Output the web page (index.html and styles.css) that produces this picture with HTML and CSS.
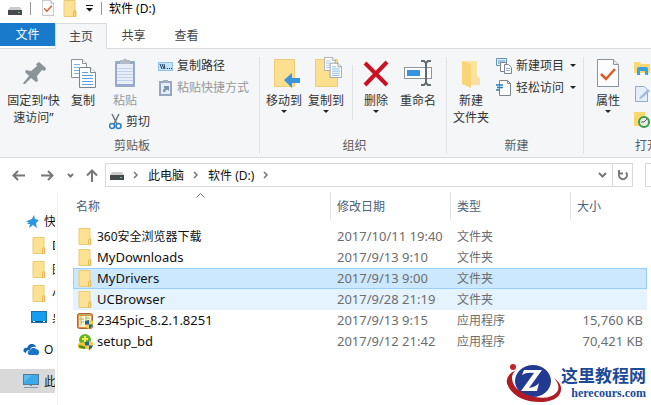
FILE: index.html
```
<!DOCTYPE html>
<html lang="zh-CN">
<head>
  <meta charset="utf-8" />
  <title>软件 (D:)</title>
  <link rel="stylesheet" href="styles.css">
</head>
<body>

<svg class="defs" aria-hidden="true">
  <symbol id="folder" viewBox="0 0 14 17">
    <path d="M1 .5h11v10l1 1v5H1z" fill="#fde294" stroke="#eccb74"/>
    <path d="M10.500 16.500v-5l2-1v6z" fill="#fbdb80" stroke="#e2be60"/>
  </symbol>
  <symbol id="drive" viewBox="0 0 14 9">
    <path d="M2 1h10l2 3H0z" fill="#c9cbcc"/>
    <rect y="4" width="14" height="5" fill="#45494b"/>
    <rect x="10" y="6" width="2" height="1" fill="#5fd068"/>
  </symbol>
  <symbol id="check" viewBox="0 0 22 28">
    <path d="M.5.5h16l5 5v22H.5z" fill="#fdfdfd" stroke="#8a929b"/>
    <path d="M16.500.5v5h5" fill="#e4e7ea" stroke="#8a929b"/>
    <path d="M4 15l5 5 9-10" fill="none" stroke="#dc5a28" stroke-width="2.500"/>
  </symbol>
  <symbol id="sheets" viewBox="0 0 25 29">
    <path d="M.5.500h11l4 4v14H.5z" fill="#fff" stroke="#8a939c"/>
    <path d="M11.500.5v4h4" fill="#fff" stroke="#8a939c"/>
    <path d="M3 5.500h6M3 8.500h5M3 11.500h5M3 14.500h5" stroke="#7db4e6"/>
    <path d="M8.500 8.500h11l5 5v15h-16z" fill="#fff" stroke="#7c858e"/>
    <path d="M19.500 8.500v5h5" fill="#fff" stroke="#7c858e"/>
    <path d="M11 13.500h6M11 16.500h11M11 19.500h11M11 22.500h11M11 25.500h11" stroke="#5aa0e0"/>
  </symbol>
  <symbol id="chev" viewBox="0 0 6 8">
    <path d="M1 1l3 3-3 3" fill="none" stroke="#777" stroke-width="1.500"/>
  </symbol>
  <symbol id="shield" viewBox="0 0 8 9">
    <path d="M4 0l4 1v4q-1 3-4 4-3-1-4-4V1z" fill="#f2d14b"/>
    <path d="M4 0v4.500H0V1zM4 4.500h4q-1 3.500-4 4.500z" fill="#28649c"/>
  </symbol>
</svg>

<header class="titlebar">
  <svg class="tb-drive" width="14" height="9"><use href="#drive"/></svg>
  <span class="tb-sep"></span>
  <button class="tb-btn" aria-label="属性"><svg width="12" height="16"><use href="#check"/></svg></button>
  <button class="tb-btn" aria-label="新建文件夹"><svg width="14" height="17"><use href="#folder"/></svg></button>
  <button class="tb-btn tb-more" aria-label="自定义快速访问工具栏"><svg width="7" height="7" viewBox="0 0 7 7"><path d="M0 0h7v1H0zM0 3h7L3.500 6.500z" fill="#111"/></svg></button>
  <span class="tb-sep tb-sep2"></span>
  <h1>软件 (D:)</h1>
</header>

<nav class="tabs">
  <button class="tab file">文件</button>
  <button class="tab active">主页</button>
  <button class="tab">共享</button>
  <button class="tab">查看</button>
</nav>

<section class="ribbon">
  <div class="group clipboard">
    <div class="tools">
      <button class="big pin">
        <svg width="32" height="32" viewBox="0 0 32 32"><path d="M21 5l7 6-1 3-3-1-5 6 1 5-2 1-5-4-6 6-2 0 1-2 5-6-4-4 1-2 5 1 6-5-1-2z" fill="#8b9499"/></svg>
        <span>固定到“快<br>速访问”</span>
      </button>
      <button class="big copy">
        <svg width="32" height="32" viewBox="-4 -2 32 32"><use href="#sheets" width="25" height="29"/></svg>
        <span>复制</span>
      </button>
      <div class="paste-col">
        <button class="big off">
          <svg width="32" height="32" viewBox="0 0 32 32">
            <rect x="6" y="4" width="20" height="26" rx="1" fill="#8298c0"/>
            <rect x="8" y="7" width="16" height="20" fill="#e6edf9"/>
            <path d="M8 11.500h16M8 14.500h16M8 17.500h16M8 20.500h16M8 23.500h16" stroke="#b4c8e8"/>
            <path d="M11 3h3q2-3 4 0h3v4H11z" fill="#a4acb8"/>
          </svg>
          <span>粘贴</span>
        </button>
        <button class="small cut">
          <svg width="13" height="16" viewBox="0 0 13 16">
            <path d="M3 0l5 10M10 0L5 10" stroke="#6d777e" stroke-width="1.500"/>
            <circle cx="3" cy="12" r="2.500" fill="none" stroke="#2b7cc4" stroke-width="1.500"/>
            <circle cx="9.500" cy="12" r="2.500" fill="none" stroke="#2b7cc4" stroke-width="1.500"/>
          </svg>
          剪切
        </button>
      </div>
      <div class="stack">
        <button class="small">
          <svg width="15" height="16" viewBox="0 0 15 16"><rect x=".5" y="4.500" width="14" height="8" fill="#c3e2fa" stroke="#92bfe2"/><path d="M2 6l2 5M4 6l2 5M6 6l1 5M9 10.500h1M11 10.500h1M13 10.500h1" stroke="#1b3d66"/></svg>
          复制路径
        </button>
        <button class="small off">
          <svg width="15" height="16" viewBox="0 0 15 16"><rect x="2" y="2" width="11" height="13" fill="#e4ecf8" stroke="#7f94b8" stroke-width="2"/><path d="M5 0h5v3H5z" fill="#8f9bb0"/><path d="M5 12q0-4 3-4H6V6h5v5L9.500 9.500Q7 10 7 12z" fill="#5f789f"/></svg>
          粘贴快捷方式
        </button>
      </div>
    </div>
    <div class="caption">剪贴板</div>
  </div>

  <div class="group organize">
    <div class="tools">
      <button class="big">
        <svg width="32" height="32" viewBox="0 0 32 32"><path d="M6.500 2.500h20v27h-20z" fill="#fde08f" stroke="#ecce78"/><path d="M16 23l8-7v5h8v5h-8v5z" fill="#3a94dc"/></svg>
        <span>移动到</span><i class="caret"></i>
      </button>
      <button class="big">
        <svg width="32" height="32" viewBox="0 0 32 32"><path d="M5.500 2.500h22v27h-22z" fill="#fde08f" stroke="#ecce78"/><use href="#sheets" x="14" y="0" width="18" height="21"/></svg>
        <span>复制到</span><i class="caret"></i>
      </button>
      <span class="divider"></span>
      <button class="big">
        <svg width="32" height="32" viewBox="0 0 32 32"><path d="M5 6l22 22M27 5L5 28" stroke="#cb1224" stroke-width="4"/></svg>
        <span>删除</span><i class="caret"></i>
      </button>
      <button class="big">
        <svg width="32" height="32" viewBox="0 0 32 32"><rect x="2.500" y="10.500" width="27" height="11" fill="#fff" stroke="#8e979d"/><rect x="5" y="13" width="13" height="6" fill="#3593df"/><path d="M19 4h3l2 2 2-2h3M24 5v22M19 28h3l2-2 2 2h3" fill="none" stroke="#626b70" stroke-width="2"/></svg>
        <span>重命名</span>
      </button>
    </div>
    <div class="caption">组织</div>
  </div>

  <div class="group new">
    <div class="tools">
      <button class="big">
        <svg width="32" height="32" viewBox="0 0 32 32"><path d="M7 4h15v22H7z" fill="#fbe3a0"/><path d="M7 4l9 3v24l-9-4z" fill="#f8d678"/><path d="M16 28h9v-7l-3-2-6 2z" fill="#fae0a0"/></svg>
        <span>新建<br>文件夹</span>
      </button>
      <div class="stack">
        <button class="small">
          <svg width="16" height="16" viewBox="0 0 16 16"><path d="M.5.500h10v7H.5z" fill="#e4f1fb" stroke="#6295ba"/><path d="M2 3h7M2 5h3" stroke="#4e98d2"/><path d="M4.500 4.500h6v9h-6z" fill="#fff" stroke="#7e868d"/><path d="M8.500 6.500h4l3 3v6h-7z" fill="#fff" stroke="#7e868d"/><path d="M10 10.500h4M10 12.500h4" stroke="#8bb7dc"/></svg>
          新建项目<i class="caret"></i>
        </button>
        <button class="small">
          <svg width="16" height="16" viewBox="0 0 16 16"><path d="M3.500.500h8l3 3v12h-11z" fill="#fff" stroke="#7e868d"/><path d="M11.500.5v3h3" fill="none" stroke="#7e868d"/><path d="M0 5h7M1 7.500h6M0 10h4" stroke="#2a7ec4" stroke-width="1.500"/></svg>
          轻松访问<i class="caret"></i>
        </button>
      </div>
    </div>
    <div class="caption">新建</div>
  </div>

  <div class="group open">
    <div class="tools">
      <button class="big">
        <svg width="32" height="32" viewBox="-5 -2 32 32"><use href="#check" width="22" height="28"/></svg>
        <span>属性</span><i class="caret"></i>
      </button>
      <div class="stack icons">
        <button class="small" aria-label="打开"><svg width="16" height="16" viewBox="0 0 16 16"><path d="M0 2h6l1 2h9v9H0z" fill="#fbd873"/><path d="M3 15V9q0-2 2-2h7q2 0 2 2v6h-3v-4H6v4z" fill="#38a3dc"/></svg></button>
        <button class="small" aria-label="编辑"><svg width="16" height="16" viewBox="0 0 16 16"><path d="M1.500.500h9l3 3v12h-12z" fill="#e4effb" stroke="#93a9c9"/><path d="M5 12l9-9 2 2-9 8z" fill="#a3b9da"/></svg></button>
        <button class="small" aria-label="历史记录"><svg width="16" height="16" viewBox="0 0 16 16"><path d="M0 0h11v14H0z" fill="#f9d770"/><circle cx="10" cy="10" r="5" fill="#e9efea" stroke="#3d9d46" stroke-width="2"/><path d="M10 10l3-3M10 10H7" stroke="#555"/></svg></button>
      </div>
    </div>
    <div class="caption">打开</div>
  </div>
</section>

<div class="navbar">
  <div class="arrows">
    <button aria-label="后退"><svg width="13" height="11" viewBox="0 0 13 11"><path d="M13 5.500H2M6 1L1.500 5.500 6 10"/></svg></button>
    <button aria-label="前进"><svg width="13" height="11" viewBox="0 0 13 11"><path d="M0 5.500h11M7 1l4.500 4.500L7 10"/></svg></button>
    <button aria-label="最近浏览的位置"><svg width="7" height="5" viewBox="0 0 7 5"><path d="M1 1l2.500 2.500L6 1"/></svg></button>
    <button aria-label="上移"><svg width="12" height="13" viewBox="0 0 12 13"><path d="M6 13V2M1 6.500L6 1.500l5 5"/></svg></button>
  </div>
  <div class="address">
    <svg width="14" height="9"><use href="#drive"/></svg>
    <svg width="6" height="8"><use href="#chev"/></svg>
    <a href="#">此电脑</a>
    <svg width="6" height="8"><use href="#chev"/></svg>
    <a href="#">软件 (D:)</a>
    <svg width="6" height="8"><use href="#chev"/></svg>
    <button class="drop" aria-label="以前的位置"><svg width="9" height="6" viewBox="0 0 9 6"><path d="M1 1l3.500 3.500L8 1"/></svg></button>
    <button class="refresh" aria-label="刷新"><svg width="12" height="12" viewBox="0 0 12 12"><path d="M3 3.500a4 4 0 1 0 6 0M2 1v3.500h4"/></svg></button>
  </div>
  <input class="search" type="text" aria-label="搜索">
</div>

<main class="content">
  <nav class="sidebar">
    <a href="#" class="root"><svg width="13" height="13" viewBox="0 0 13 13"><path d="M8 0l1 4 4 1-3 3 1 5-4-3-4 3 1-4H1l2-2H0l3-2 3-1z" fill="#2b97e2"/></svg>快</a>
    <a href="#"><svg width="14" height="17"><use href="#folder"/></svg>D</a>
    <a href="#"><svg width="14" height="17"><use href="#folder"/></svg>图</a>
    <a href="#"><svg width="14" height="17"><use href="#folder"/></svg>小</a>
    <a href="#" class="desk"><svg width="16" height="12" viewBox="0 0 16 12"><rect x=".5" y=".5" width="15" height="11" fill="#159df0" stroke="#2470a4"/><path d="M1 10.500h14" stroke="#0b4f87"/><path d="M2 10.500h2M12 10.500h2" stroke="#fff"/></svg>桌</a>
    <a href="#" class="root cloud"><svg width="16" height="11" viewBox="0 0 16 11"><path d="M3 9Q-1 8 1 5q1-2 3-1 2-5 6-4 3 1 3 3-5-1-6 3-4 0-4 3z" fill="#1567b5"/><path d="M6 11q-3-3 1-5 3-4 6-1 4 1 3 4l-1 2z" fill="#1c75c8"/></svg>O</a>
    <a href="#" class="root pc"><svg width="16" height="15" viewBox="0 0 16 15"><rect x=".5" y=".5" width="15" height="10" fill="#5bbcf2" stroke="#52798f"/><path d="M1 8l8-7h6v9H1z" fill="#3caaea"/><path d="M7 11h2v1H7z" fill="#7d8b94"/><path d="M1 13.500h14" stroke="#7d9eb5"/></svg>此</a>
  </nav>

  <div class="files">
    <table>
      <colgroup><col><col class="c-date"><col class="c-type"><col class="c-size"></colgroup>
      <thead>
        <tr>
          <th>名称<svg class="sort" width="9" height="5" viewBox="0 0 9 5"><path d="M.5 4.500l4-4 4 4" fill="none" stroke="#777"/></svg></th>
          <th>修改日期</th><th>类型</th><th>大小</th>
        </tr>
      </thead>
      <tbody>
        <tr><td class="name zh"><svg width="14" height="17"><use href="#folder"/></svg>360安全浏览器下载</td><td>2017/10/11 19:40</td><td class="zh">文件夹</td><td></td></tr>
        <tr><td class="name"><svg width="14" height="17"><use href="#folder"/></svg>MyDownloads</td><td>2017/9/13 9:10</td><td class="zh">文件夹</td><td></td></tr>
        <tr class="selected"><td class="name"><svg width="14" height="17"><use href="#folder"/></svg>MyDrivers</td><td>2017/9/13 9:00</td><td class="zh">文件夹</td><td></td></tr>
        <tr class="hover"><td class="name"><svg width="14" height="17"><use href="#folder"/></svg>UCBrowser</td><td>2017/9/28 21:19</td><td class="zh">文件夹</td><td></td></tr>
        <tr>
          <td class="name app"><svg width="16" height="16" viewBox="0 0 16 16"><rect x=".5" y=".5" width="15" height="15" rx="2" fill="#e98f3f" stroke="#a96631"/><rect x="2" y="3" width="12" height="11" fill="#f6f5d9"/><path d="M4 3v9M2 6h5M4 9h3M9 3v8M9 5h4M9 8h3M3 1.500h10" stroke="#a9b96a"/><use href="#shield" x="8" y="7" width="8" height="9"/></svg>2345pic_8.2.1.8251</td>
          <td>2017/9/13 9:15</td><td class="zh">应用程序</td><td class="size">15,760 KB</td>
        </tr>
        <tr>
          <td class="name app"><svg width="16" height="16" viewBox="0 0 16 16"><circle cx="8" cy="6" r="6" fill="#62b32c"/><path d="M1 10q5-4 10 1l1 4H3q-3-1-2-5z" fill="#efc72e"/><path d="M8 2v6M5 5h6" stroke="#f7ed52" stroke-width="2"/><path d="M2 12l6 2" stroke="#3b8221" stroke-width="2"/><use href="#shield" x="8" y="7" width="8" height="9"/></svg>setup_bd</td>
          <td>2017/9/12 21:42</td><td class="zh">应用程序</td><td class="size">70,421 KB</td>
        </tr>
      </tbody>
    </table>
  </div>
</main>

<div class="watermark">
  <svg width="56" height="40" viewBox="0 0 56 40">
    <ellipse cx="28" cy="18" rx="18" ry="16" fill="#233a93"/>
    <path d="M11 7Q-3 14 4 25q10 15 34 14 17-2 18-12 1-6-7-12 7 8 3 14-7 8-22 5Q12 30 8 20 5 12 11 7z" fill="#b01c26"/>
    <circle cx="8" cy="4" r="3" fill="#c3202e"/>
    <path d="M17 12l2-5h18L24 25q7-1 10-5l-2 8H16l13-18q-8-1-12 2z" fill="#fff"/>
  </svg>
  <div class="wm-text"><strong>这里教程网</strong><span>herecours.com</span></div>
</div>

</body>
</html>
```
FILE: styles.css
```
* {
  box-sizing: border-box;
}

body {
  margin: 0;
  height: 100vh;
  display: flex;
  flex-direction: column;
  overflow: hidden;
  background: #fff;
  color: #333;
  font: 12px/17px "Noto Sans", "Noto Sans CJK SC", sans-serif;
}

button {
  padding: 0;
  border: 0;
  background: none;
  color: inherit;
  font: inherit;
  white-space: nowrap;
}

a {
  color: inherit;
  text-decoration: none;
}

svg {
  flex: none;
}

.defs {
  position: absolute;
  width: 0;
  height: 0;
}

/* title bar */
.titlebar {
  display: flex;
  align-items: center;
  height: 23px;
  padding: 0 0 7px 8px;
}

.tb-drive {
  margin-top: 4px;
}

.tb-sep {
  width: 1px;
  height: 13px;
  margin: 0 11px 0 8px;
  background: #999;
}

.tb-sep2 {
  margin: 0 7px 0 8px;
}

.tb-btn {
  display: flex;
  margin-right: 9px;
}

.tb-more {
  margin: 0;
}

.titlebar h1 {
  margin: 0;
  font-size: 12px;
  font-weight: normal;
  color: #000;
}

/* tabs */
.tabs {
  display: flex;
  height: 26px;
  border-bottom: 1px solid #dadbdc;
}

.tab {
  width: 53px;
  height: 25px;
  color: #444;
}

.tab.file {
  width: 55px;
  height: 23px;
  background: #1979ca;
  color: #fff;
}

.tab.active {
  width: 52px;
  height: 26px;
  border: 1px solid #dadbdc;
  border-bottom: 0;
  background: #f5f6f7;
}

/* ribbon */
.ribbon {
  display: flex;
  height: 109px;
  padding: 8px 0 3px;
  border-bottom: 1px solid #dadbdc;
  background: #f5f6f7;
  overflow: hidden;
}

.group {
  flex: none;
  display: flex;
  flex-direction: column;
  border-right: 1px solid #e1e2e4;
}

.tools {
  display: flex;
  flex: 1;
}

.caption {
  text-align: center;
  color: #5a5a5a;
}

.big {
  display: flex;
  flex-direction: column;
  align-items: center;
  align-self: flex-start;
  width: 42px;
}

.big svg {
  margin-bottom: 3px;
}

.caret {
  border: 3px solid transparent;
  border-top-color: #222;
  border-bottom: 0;
}

.big .caret {
  margin-top: 1px;
}

.small {
  display: flex;
  align-items: center;
  gap: 4px;
  height: 17px;
}

.small .caret {
  margin-left: 2px;
}

.off {
  color: #999;
}

.off svg {
  opacity: .8;
}

.stack {
  display: flex;
  flex-direction: column;
  gap: 5px;
}

.clipboard {
  width: 260px;
  padding-left: 5px;
}

.pin {
  width: 57px;
}

.paste-col {
  width: 44px;
  margin-left: 5px;
}

.paste-col .big {
  width: 32px;
}

.paste-col .cut {
  margin-top: 4px;
}

.clipboard .stack {
  margin-left: 5px;
}

.organize {
  width: 187px;
  padding-left: 3px;
}

.divider {
  width: 1px;
  height: 55px;
  margin: 8px 2px 0 5px;
  background: #e1e2e4;
}

.new {
  width: 137px;
  padding-left: 3px;
}

.new .stack {
  margin-left: 4px;
}

.open {
  width: 124px;
  padding-left: 3px;
}

.open .stack {
  gap: 9px;
  padding-top: 2px;
  margin-left: 5px;
}

/* navigation bar */
.navbar {
  display: flex;
  align-items: center;
  height: 34px;
}

.arrows {
  flex: none;
  display: flex;
  align-items: center;
  justify-content: space-between;
  width: 105px;
  padding: 0 7px 0 12px;
}

.arrows button {
  display: flex;
}

.arrows button:first-child {
  margin-right: 4px;
}

.arrows path,
.address button path {
  fill: none;
  stroke: #777;
  stroke-width: 2;
}

.address {
  flex: 1;
  display: flex;
  align-items: center;
  gap: 9px;
  height: 24px;
  padding-left: 4px;
  border: 1px solid #d9d9d9;
  color: #111;
}

.address button {
  display: flex;
  align-items: center;
  justify-content: center;
  width: 20px;
  height: 22px;
}

.address .drop {
  margin-left: auto;
  margin-right: -9px;
}

.address .refresh {
  border-left: 1px solid #d9d9d9;
}

.search {
  width: 6px;
  height: 24px;
  margin-left: 12px;
  padding: 0;
  border: 1px solid #d9d9d9;
  border-right: 0;
}

/* body of the window */
.content {
  flex: 1;
  display: flex;
}

.sidebar {
  flex: none;
  width: 58px;
  padding: 17px 2px 0 0;
  border-right: 1px solid #f0f0f0;
}

.sidebar a {
  display: flex;
  align-items: center;
  gap: 6px;
  height: 24px;
  padding-left: 32px;
  overflow: hidden;
  color: #111;
}

.sidebar .root {
  gap: 5px;
  padding-left: 26px;
}

.sidebar .desk {
  padding-left: 31px;
  gap: 5px;
}

.sidebar .cloud {
  margin: 8px 0;
  padding-left: 23px;
}

.sidebar .pc {
  padding-left: 23px;
  background: #d9d9d9;
}

.files {
  flex: 1;
  padding: 0 4px 0 15px;
}

table {
  width: 100%;
  table-layout: fixed;
  border-collapse: separate;
  border-spacing: 0;
}

.c-date,
.c-type {
  width: 120px;
}

.c-size {
  width: 76px;
}

th {
  position: relative;
  height: 28px;
  padding: 0 6px;
  border-right: 1px solid #e2e2e2;
  color: #4c607a;
  font-weight: normal;
  text-align: left;
}

th:first-child {
  padding-left: 3px;
}

th:last-child {
  border-right: 0;
}

.sort {
  position: absolute;
  top: 1px;
  left: 48%;
}

thead::after {
  content: "";
  display: block;
  height: 6px;
}

td {
  height: 21px;
  padding: 0 6px;
  color: #6d6d6d;
  font-size: 13px;
  line-height: 17px;
  white-space: nowrap;
}

td.zh {
  font-size: 12px;
}

.name {
  padding-left: 5px;
  color: #111;
}

.name svg {
  margin-right: 5px;
  vertical-align: bottom;
}

.name.app {
  padding-left: 4px;
}

.name.app svg {
  margin-right: 4px;
}

.size {
  padding-right: 4px;
  text-align: right;
}

.selected td {
  border: 1px solid #99ceff;
  border-width: 1px 0;
  background: #cce8ff;
}

.selected td:first-child {
  border-left-width: 1px;
  padding-left: 4px;
}

.selected td:last-child {
  border-right-width: 1px;
}

.hover td {
  background: #e5f3ff;
}

/* site mark over the file list */
.watermark {
  position: absolute;
  right: 5px;
  bottom: 2px;
  display: flex;
  align-items: center;
  color: #1d4a97;
}

.wm-text {
  display: flex;
  flex-direction: column;
  align-items: flex-end;
}

.wm-text strong {
  font-size: 17px;
  line-height: 20px;
}

.wm-text span {
  font: bold 12px/14px "Liberation Serif", serif;
}
```
